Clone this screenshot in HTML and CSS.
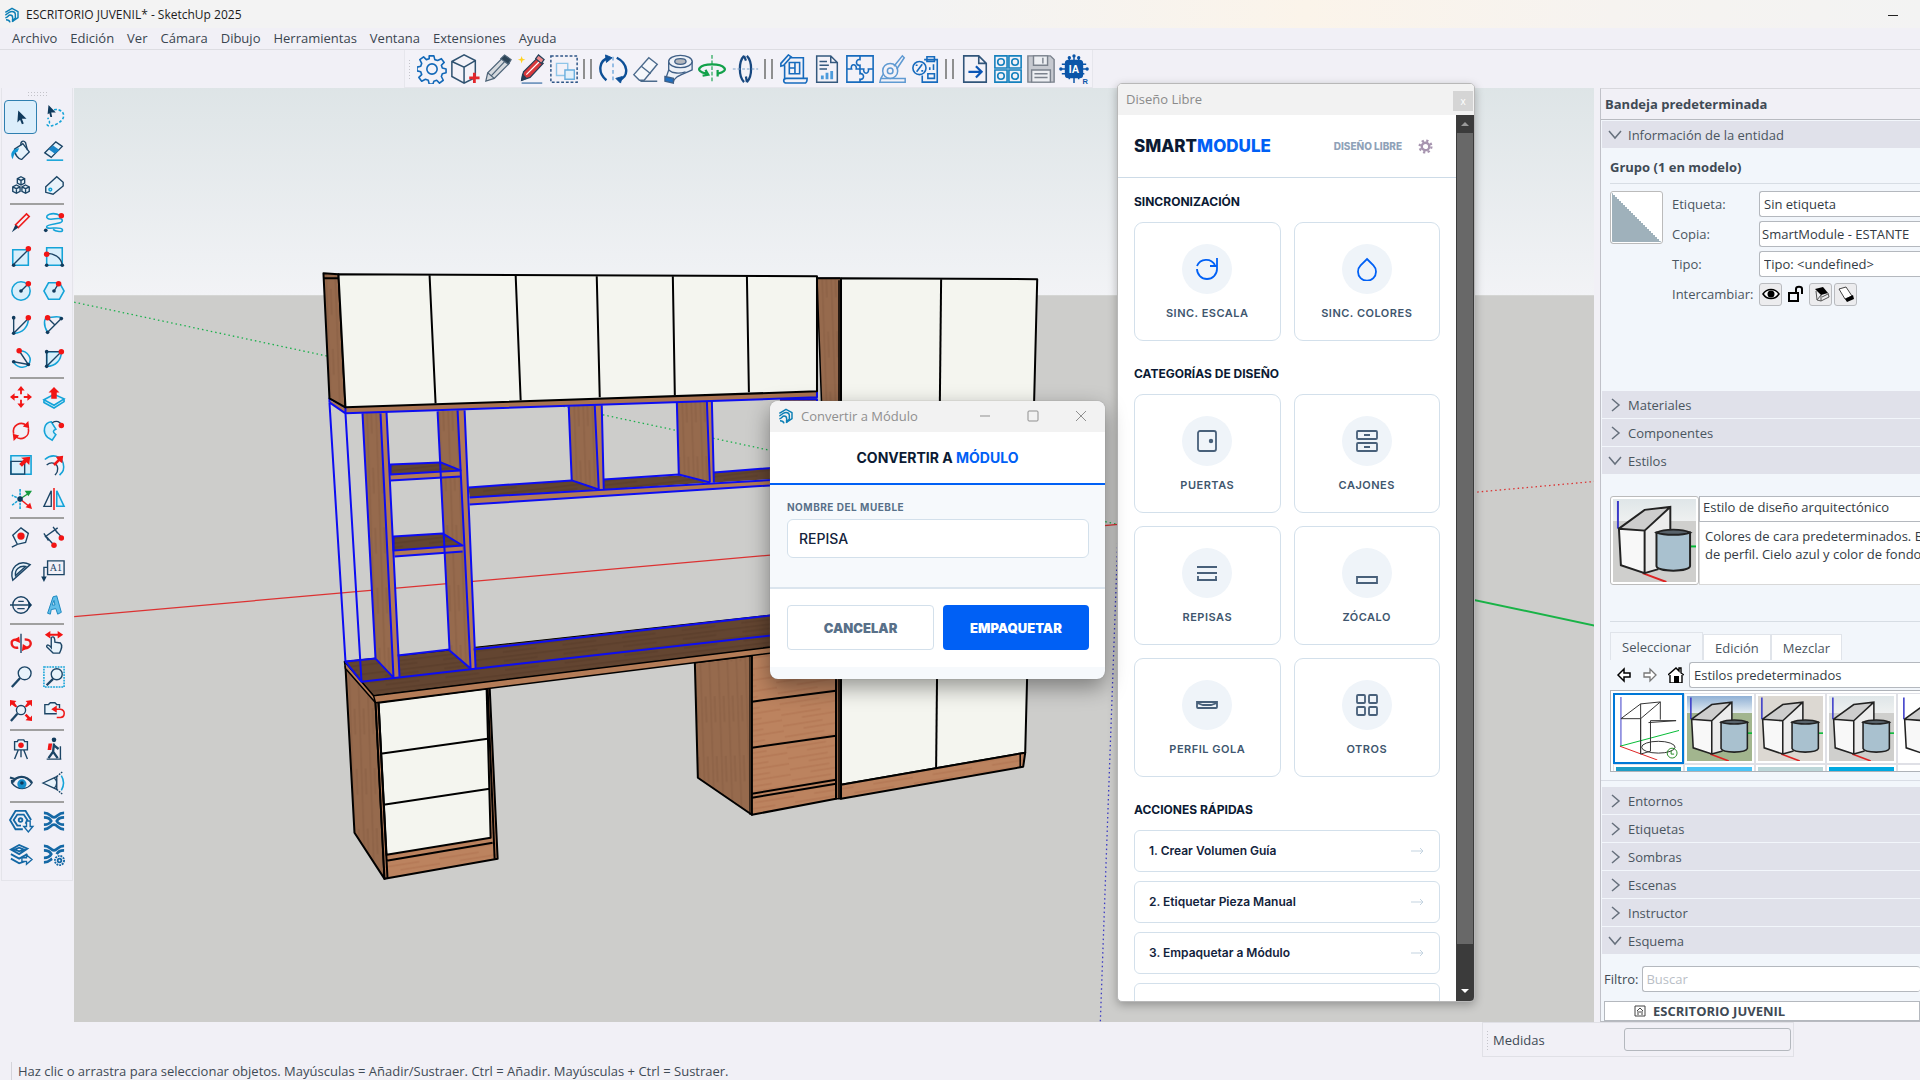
FILE: index.html
```html
<!DOCTYPE html>
<html lang="es">
<head>
<meta charset="utf-8">
<title>ESCRITORIO JUVENIL* - SketchUp 2025</title>
<link rel="stylesheet" href="styles.css">
</head>
<body>
<svg class="defs" aria-hidden="true">
  <defs>
    <linearGradient id="sky" x1="0" y1="0" x2="0" y2="1"><stop offset="0" stop-color="#dde4e6"/><stop offset="1" stop-color="#f2f3f6"/></linearGradient>
    <pattern id="wood" width="60" height="11" patternUnits="userSpaceOnUse" patternTransform="rotate(-9)"><rect width="60" height="11" fill="#bc835f"/><path d="M0 3h40M20 8h40" stroke="#b57a57" stroke-width="2"/></pattern>
    <pattern id="side" width="9" height="60" patternUnits="userSpaceOnUse" patternTransform="rotate(-2)"><rect width="9" height="60" fill="#966a4d"/><path d="M2 0v60M6 0v26" stroke="#8f6448" stroke-width="2"/></pattern>
    <pattern id="dark" width="60" height="9" patternUnits="userSpaceOnUse" patternTransform="rotate(-7)"><rect width="60" height="9" fill="#634531"/><path d="M0 2h60M0 6h34" stroke="#5d402d" stroke-width="2"/></pattern>
  </defs>
  <symbol id="logo" viewBox="0 0 24 24"><g fill="none" stroke="#0b7fb5" stroke-width="2.2" stroke-linejoin="round"><path d="M2 8 12 2l9 5v9l-9 6"/><path d="M2 12c3-1 4-4 8-5s7 1 7 4v6l-5 3"/><path d="M2 16c4 0 4-4 7-4s4 2 4 4v6"/><path d="M3 19c3 0 5 0 6 4"/></g></symbol>
  <symbol id="boxes" viewBox="0 0 84 84"><path d="M5 2v28" stroke="#3a3ac8" stroke-width="2"/><path d="m30 75 24 9" stroke="#d22" stroke-width="2"/><path d="M76 48h8" stroke="#0b3" stroke-width="2"/><path d="M6 30 32 32v43L8 67z" fill="#f8f8f8"/><path d="M6 30 32 11l26-3-26 24z" fill="#cdcdcd"/><path d="M32 32 58 8v52L44 72l-12 3z" fill="#ececec"/><path d="M6 30 32 11l26-3v24M6 30l26 2v43L8 67zM32 32 58 8M32 75l14-4" fill="none" stroke="#222" stroke-width="2"/><path d="M44 34v34c2 6 32 6 34 0V34z" fill="#a9c1cf" stroke="#222" stroke-width="2"/><path d="M44 34c8-4 26-4 34 0-8 3-26 3-34 0z" fill="#59636b" stroke="#222" stroke-width="2"/></symbol>
  <symbol id="chev-d" viewBox="0 0 14 14"><path d="m1 3 6 7 6-7" fill="none" stroke="#66707c" stroke-width="1.5"/></symbol>
  <symbol id="chev-r" viewBox="0 0 14 14"><path d="m4 1 7 6-7 6" fill="none" stroke="#66707c" stroke-width="1.5"/></symbol>
  <symbol id="arrow" viewBox="0 0 14 8"><path d="M0 4h12M9 1l3 3-3 3" fill="none" stroke="#c3d3e0"/></symbol>
</svg>

<header class="titlebar"><svg class="app-logo"><use href="#logo"/></svg><span>ESCRITORIO JUVENIL* - SketchUp 2025</span><button class="win-min" aria-label="Minimizar"></button></header>
<nav class="menubar">
  <a href="#">Archivo</a><a href="#">Edición</a><a href="#">Ver</a><a href="#">Cámara</a><a href="#">Dibujo</a><a href="#">Herramientas</a><a href="#">Ventana</a><a href="#">Extensiones</a><a href="#">Ayuda</a>
</nav>

<div class="toolbar-row"><div class="toolbar" role="toolbar">
  <span class="grip"></span>
  <button aria-label="Configuración"><svg viewBox="0 0 32 32" fill="none" stroke="#1268b8" stroke-width="1.7"><path d="M13 2h5l1 4 3 1 4-2 3 4-3 3 1 3 4 1v4l-4 1-1 3 2 4-4 3-3-3-3 1-1 3h-4l-1-4-3-1-4 2-3-4 3-3-1-3-4-1v-4l4-1 1-3-2-4 4-3 3 3 3-1z" stroke-linejoin="round"/><circle cx="16" cy="16" r="5.5"/></svg></button>
  <button aria-label="Crear volumen"><svg viewBox="0 0 32 32" fill="none" stroke="#2f5270" stroke-width="1.6"><path d="M2 8 15 1l12 6v18l-12 6-13-7zM2 8l13 6 12-7M15 14v17"/><path d="M26 20v11M20.500 25.500h11" stroke="#e3262b" stroke-width="3"/></svg></button>
  <button aria-label="Lápiz"><svg viewBox="0 0 32 32" fill="#d5d9de" stroke="#4e6478" stroke-width="1.3"><path d="m3 29 2-9L21 4l7 6-16 16z"/><path d="m5 20 7 6M9 23 24 7"/><path d="m19 5 4-4 7 5-3 5z" fill="#2c4356"/></svg></button>
  <button aria-label="Editar"><svg viewBox="0 0 32 32" stroke="#243f58" stroke-width="1.3"><path d="m6 28 2-9L22 5l7 5-14 15z" fill="#d8383b"/><path d="m11 22 14-14" stroke="#fff"/><path d="m21 5 3-4 6 5-3 4z" fill="#ef8a8a"/><path d="m6 28 1-6 4 4z" fill="#243f58"/><path d="M6 31h22" stroke="#3a6ea5"/><path d="m6 2 1 3 3 1-3 1-1 3-1-3-3-1 3-1z" fill="#ffd21f" stroke="none"/></svg></button>
  <button aria-label="Seleccionar grupo"><svg viewBox="0 0 32 32" fill="none"><path d="M2 2h28v28H2z" stroke="#2f5687" stroke-width="1.6" stroke-dasharray="3 2"/><path d="M8 10h12v13H8z" stroke="#8fc5e8" stroke-width="1.5"/><path d="M17 17h10v10H17z" fill="#e3f0fa" stroke="#6aaede" stroke-width="1.500"/></svg></button>
  <span class="sep"></span>
  <button aria-label="Rotar"><svg viewBox="0 0 32 32" fill="none" stroke="#0d4f96" stroke-width="2.600"><path d="M9 28C-1 20 1 6 12 4M20 4c12 6 14 20 2 24"/><path d="m8 1 7 3-6 5zM24 31l-5-5 7-2z" fill="#0d4f96" stroke-width="1"/><path d="M16 3v27" stroke="#6fa8dc" stroke-width="1.500" stroke-dasharray="4 3"/></svg></button>
  <button aria-label="Borrador"><svg viewBox="0 0 32 32" fill="#f5f7fb" stroke="#4b6a8c" stroke-width="1.500"><path d="M3 22 19 4l9 7-14 17H9z"/><path d="m11 13 10 8M10 29h18"/></svg></button>
  <button aria-label="Cinta"><svg viewBox="0 0 32 32" fill="#edf1f7" stroke="#3f5f86" stroke-width="1.400"><path d="M5 8v9l-3 9 8 4c2-7 8-7 20-13V8z"/><path d="M5 17c4 4 12 4 18 2"/><ellipse cx="17.500" cy="8" rx="12.500" ry="6.500"/><ellipse cx="17.500" cy="8" rx="6" ry="3" fill="#b5b8bd"/><path d="m1 24 9 2v5l-9-2z" fill="#1f6fc0"/></svg></button>
  <button aria-label="Eje vertical"><svg viewBox="0 0 32 32" fill="none" stroke="#12a14a" stroke-width="2.400"><path d="M10 21c-14-3-7-10 6-10s20 7 6 10M9 17l3 5-6 1"/><path d="M22 17v7" /><path d="M16 1v30" stroke-width="1.200" stroke-dasharray="4 2"/></svg></button>
  <button aria-label="Eje horizontal"><svg viewBox="0 0 32 32" fill="none" stroke="#17477f" stroke-width="2.400"><path d="M15 30C9 24 9 8 15 2M18 2c6 6 6 22 0 28M15 2l2 5M18 30l-1-6"/><path d="M3 16h27" stroke="#7ca1c8" stroke-width="1.300" stroke-dasharray="3 2"/></svg></button>
  <span class="sep"></span>
  <button aria-label="Plano"><svg viewBox="0 0 32 32" fill="none" stroke="#176bbd" stroke-width="1.700"><path d="M11 4h15v22M6 12v15M26 26h4c0 3-1 5-3 5H8c-4 0-4-5 0-5h18M2 10 10 1l3 2-8 9-3 1zM11 9h11v12H11zM11 15h6V9M17 15v6"/></svg></button>
  <button aria-label="Informe"><svg viewBox="0 0 32 32" fill="none" stroke="#35597e" stroke-width="1.600"><path d="M5 2h15l7 7v21H5zM20 2v7h7M8 8h8M8 12h10M8 16h8"/><path d="M11 27v-4M16 27v-7M21 27v-9" stroke="#4c9bdc" stroke-width="3"/></svg></button>
  <button aria-label="Ensamblar"><svg viewBox="0 0 32 32" fill="none" stroke="#176bbd" stroke-width="1.700"><path d="M2 2h28v28H2zM16 2v4c-5-1-5 7 0 6v4M2 16h5c-2-6 6-6 5 0h8c-1 6 6 6 5 0h5M16 16v5c5-1 5 7 0 6v3"/></svg></button>
  <button aria-label="Corte"><svg viewBox="0 0 32 32" fill="none" stroke="#5f9ad2" stroke-width="1.600"><circle cx="13" cy="18" r="8"/><circle cx="13" cy="18" r="3"/><path d="M17 13 26 2l2 2-8 12M3 26h26v4H2zM3 26l3-5"/></svg></button>
  <button aria-label="Presupuesto"><svg viewBox="0 0 32 32" fill="none" stroke="#176bbd" stroke-width="1.700"><path d="M14 6h14v24H12v-7M17 3h8v5h-8z"/><circle cx="9" cy="15" r="7"/><path d="M6 19 12 11M5 12h2M11 18h2M20 17v-3M24 17v-6M18 21h7v5h-7z"/></svg></button>
  <span class="sep"></span>
  <button aria-label="Exportar"><svg viewBox="0 0 32 32" fill="none" stroke="#31557a" stroke-width="1.700"><path d="M4 2h16l8 8v20H4zM20 2v8h8"/><path d="M9 19h14M17 13l6 6-6 6" stroke="#0a55b5" stroke-width="2.400"/></svg></button>
  <button aria-label="Catálogo"><svg viewBox="0 0 32 32" fill="none" stroke="#1580bd" stroke-width="1.700"><path d="M2 2h13v13H2zM17 2h13v13H17zM2 17h13v13H2zM17 17h13v13H17z"/><circle cx="8.500" cy="8.500" r="3.500"/><circle cx="23.500" cy="8.500" r="3.500"/><circle cx="8.500" cy="23.500" r="3.500"/><circle cx="23.500" cy="23.500" r="3.500"/></svg></button>
  <button aria-label="Guardar"><svg viewBox="0 0 32 32" fill="#c6c9d0" stroke="#7b828d" stroke-width="1.500"><path d="M2 2h24l4 4v24H2z"/><path d="M8 2h15v10H8zM6 17h20v13H6z" fill="#eceef2"/><path d="M18 4v6M9 21h14M9 25h14"/></svg></button>
  <button aria-label="IA"><svg viewBox="0 0 32 32" fill="#0b55a8" stroke="#0b55a8" stroke-width="1.600"><path d="M11 3v24M16 1v30M21 3v24M3 11h26M1 16h30M3 21h24"/><rect x="7" y="7" width="18" height="18" rx="3"/><circle cx="16" cy="2" r="1"/><circle cx="2" cy="16" r="1"/><circle cx="30" cy="16" r="1"/><circle cx="11" cy="4" r="1"/><circle cx="21" cy="4" r="1"/><text x="16" y="20" class="ia">IA</text><text x="28" y="32" class="ia-r">R</text></svg></button>
</div></div>

<main class="workspace">
<aside class="tools">
  <span class="grip-h"></span>
  <div class="tool-grid">
    <button class="on" aria-label="Seleccionar"><svg viewBox="0 0 24 24"><path d="m9 5 9 9h-5l2 5-2 1-2-5-3 3z" fill="#103a5c"/></svg></button>
    <button aria-label="Lazo"><svg viewBox="0 0 24 24"><path d="M12 4c8-1 12 4 10 9s-9 8-14 9c-4 0-4-3-2-3s1-4-1-6" class="c" stroke-dasharray="3 2"/><path d="m6-1 8 8H9l1 5H8L7 8 5 9z" fill="#103a5c"/></svg></button>
    <button aria-label="Pintar"><svg viewBox="0 0 24 24"><path d="m5 10 9-6 7 9-8 8c-3 1-9-6-8-11z" class="nf"/><path d="M3 21c-4-6 0-12 7-12l-2 4c-3 0-4 4-5 8z" fill="#1197d5"/><path d="M12 6c-1-5 3-6 5-3l2 8" class="n"/></svg></button>
    <button aria-label="Borrar"><svg viewBox="0 0 24 24"><path d="m2 14 12-12 7 5-12 12z" class="nf"/><path d="m6 10 5-4 7 5-5 4z" fill="#1b86c9"/><path d="M4 22h18" class="c"/></svg></button>
    <button aria-label="Componentes"><svg viewBox="0 0 24 24"><path d="m12 3 4 2v5l-4 2-4-2V5zM8 5l4 2 4-2M12 7v5M7 12l4 2v5l-4 2-4-2v-5zM3 14l4 2 4-2M7 16v5M17 12l4 2v5l-4 2-4-2v-5zM13 14l4 2 4-2M17 16v5" class="nf"/></svg></button>
    <button aria-label="Etiqueta"><svg viewBox="0 0 24 24"><path d="M3 14 15 3l7 6v4L11 22l-8-2z" class="nf"/><circle cx="8" cy="17" r="1.500" class="c"/></svg></button>
  </div><hr>
  <div class="tool-grid">
    <button aria-label="Línea"><svg viewBox="0 0 24 24"><path d="m6 14 12-12 3 3L9 17z" class="r"/><path d="m2 22 4-8 3 3z" fill="#103a5c"/></svg></button>
    <button aria-label="Mano alzada"><svg viewBox="0 0 24 24"><path d="M19 4C10-1 1 4 5 7s15-3 16 2-16 3-17 7 15-1 17 3-8 2-10 0" class="c"/><circle cx="20" cy="4" r="3" class="rd"/><circle cx="3" cy="20" r="2" class="nd"/></svg></button>
    <button aria-label="Rectángulo"><svg viewBox="0 0 24 24"><path d="M3 4h17v17H3z" class="cf"/><path d="M3 21 20 4" class="n"/><circle cx="20" cy="3" r="3" class="rd"/><circle cx="4" cy="21" r="2" class="nd"/></svg></button>
    <button aria-label="Rectángulo girado"><svg viewBox="0 0 24 24"><path d="M4 2h17v19H4z" class="cf"/><path d="M4 8c8 0 16 4 17 13" class="n"/><circle cx="4" cy="9" r="3" class="rd"/><circle cx="4" cy="21" r="2" class="nd"/><circle cx="21" cy="21" r="2" class="nd"/></svg></button>
    <button aria-label="Círculo"><svg viewBox="0 0 24 24"><circle cx="12" cy="12" r="10" class="cf"/><path d="m12 12 8-8" class="n"/><circle cx="12" cy="12" r="2" class="nd"/><circle cx="20" cy="4" r="3" class="rd"/></svg></button>
    <button aria-label="Polígono"><svg viewBox="0 0 24 24"><path d="M6 3h12l5 9-5 9H6l-5-9z" class="cf"/><path d="m12 12 5-8" class="n"/><circle cx="12" cy="12" r="2" class="nd"/><circle cx="17" cy="4" r="3" class="rd"/></svg></button>
    <button aria-label="Arco"><svg viewBox="0 0 24 24"><path d="M4 4v17L20 5" class="n"/><path d="M20 5c0 9-6 16-16 16" class="c"/><circle cx="20" cy="4" r="3" class="rd"/><circle cx="4" cy="4" r="2" class="nd"/><circle cx="4" cy="21" r="2" class="nd"/></svg></button>
    <button aria-label="Arco de 2 puntos"><svg viewBox="0 0 24 24"><path d="M5 20C0 12 1 4 5 4s14-3 15 1" class="c"/><path d="M5 20 20 5M5 4l8 8" class="n"/><circle cx="5" cy="4" r="3" class="rd"/><circle cx="20" cy="5" r="2" class="nd"/><circle cx="5" cy="20" r="2" class="nd"/></svg></button>
    <button aria-label="Arco de 3 puntos"><svg viewBox="0 0 24 24"><path d="M10 3c10 0 15 9 10 15s-14 2-16-3" class="c"/><path d="m10 3 10 15L4 15" class="n"/><circle cx="10" cy="3" r="3" class="rd"/><circle cx="4" cy="15" r="2" class="nd"/><circle cx="20" cy="18" r="2" class="nd"/></svg></button>
    <button aria-label="Sector"><svg viewBox="0 0 24 24"><path d="M4 4h16c0 9-6 16-16 16z" class="cf"/><path d="M4 4v16L20 4z" class="n"/><circle cx="20" cy="4" r="3" class="rd"/><circle cx="4" cy="4" r="2" class="nd"/><circle cx="4" cy="20" r="2" class="nd"/></svg></button>
  </div><hr>
  <div class="tool-grid">
    <button aria-label="Mover"><svg viewBox="0 0 24 24"><path d="m12 0 4 5h-3v4h-2V5H8zM12 24l-4-5h3v-4h2v4h3zM0 12l5-4v3h4v2H5v3zM24 12l-5 4v-3h-4v-2h4V8z" class="rd"/></svg></button>
    <button aria-label="Empujar"><svg viewBox="0 0 24 24"><path d="m1 15 11-6 11 5-11 7zM1 15v3l11 6 11-7v-3" class="cf"/><path d="m12 1 6 6h-3v7H9V7H6z" class="rd"/></svg></button>
    <button aria-label="Girar"><svg viewBox="0 0 24 24"><path d="M4 15C2 5 12 1 18 6M20 9c2 10-8 14-14 9" class="r"/><path d="m20 1 1 8-7-2zM4 23l-1-8 7 2z" class="rd"/></svg></button>
    <button aria-label="Sígueme"><svg viewBox="0 0 24 24"><path d="M9 2c-8 1-10 11-4 17l5 3 4-6c-4-3-3-5 0-6z" class="cf"/><path d="M10 3c5-3 9-1 10 3" class="n"/><circle cx="20" cy="6" r="3" class="rd"/></svg></button>
    <button aria-label="Escala"><svg viewBox="0 0 24 24"><path d="M1 2h22v20H1z" class="cf"/><path d="M1 8h15v14H1z" class="n"/><path d="m22 3-1 9-3-3-5 5-3-3 5-5-3-2z" class="rd"/></svg></button>
    <button aria-label="Desfase"><svg viewBox="0 0 24 24"><path d="M2 6c8-7 18-4 20 4s-1 10-4 13" class="c"/><path d="M4 12c6-5 12-1 12 4s-1 5-3 7" class="n"/><path d="m22 2-1 8-3-2-5 5-2-2 5-5-2-3z" class="rd"/></svg></button>
    <button aria-label="Ejes"><svg viewBox="0 0 24 24"><path d="M11 12V0M11 12 2 8M11 12v12M11 12l-9 7" class="c" stroke-dasharray="3 1"/><path d="m11 12 11 9" class="r"/><path d="m17 21 7 2-2-7z" class="rd"/><path d="m11 12 9-6" stroke="#159a3e" stroke-width="1.500"/><path d="m16 3 8 0-4 6z" fill="#159a3e"/><circle cx="11" cy="12" r="3" class="nd"/></svg></button>
    <button aria-label="Simetría"><svg viewBox="0 0 24 24"><path d="M9 3v17H1z" class="n"/><path d="M15 3v17h8z" class="cf"/><path d="M12 0v24" class="r"/></svg></button>
  </div><hr>
  <div class="tool-grid">
    <button aria-label="Medir"><svg viewBox="0 0 24 24"><path d="M3 10 12 2l8 6-3 10-9 2zM8 20l-6 3" class="nf"/><circle cx="12" cy="11" r="4" class="rd"/></svg></button>
    <button aria-label="Acotación"><svg viewBox="0 0 24 24"><path d="m2 12 14-10M1 8l5 8M11 1l5 7M4 12l8 9M14 5l7 8" class="n"/><circle cx="12" cy="21" r="3" class="rd"/><circle cx="20" cy="13" r="3" class="rd"/></svg></button>
    <button aria-label="Transportador"><svg viewBox="0 0 24 24"><path d="M3 22C-1 9 9-1 22 5zM6 17c-1-6 4-11 11-10z" class="nf"/></svg></button>
    <button aria-label="Texto"><svg viewBox="0 0 24 24"><path d="M5 1h18v15H5zM5 8H1v11" class="n"/><path d="m1 24-3-6h6z" fill="#103a5c"/><text x="14" y="12" class="a1">A1</text></svg></button>
    <button aria-label="Sección"><svg viewBox="0 0 24 24"><circle cx="12" cy="12" r="9" class="n"/><path d="M0 12h23M9 8h6M8 16h8" class="n"/><path d="m18 5 6 7-6 7 3-7z" class="nd"/></svg></button>
    <button aria-label="Texto 3D"><svg viewBox="0 0 24 24"><path d="m5 21 6-18 4-1 5 18-4 2-2-6-5 1-1 5zM10 12h3l-1-5z" fill="#62bee9" stroke="#1583bd"/></svg></button>
  </div><hr>
  <div class="tool-grid">
    <button aria-label="Orbitar"><svg viewBox="0 0 24 24"><path d="M8 8C2 8 1 11 2 14M16 8c7 0 8 5 5 8-2 2-5 2-7 2M2 10c-1 5 2 8 7 7" class="r big"/><path d="m14 13-1 8 7-4zM10 5l1 7-7-3z" class="rd"/><path d="M12 2v21" class="n"/></svg></button>
    <button aria-label="Desplazar"><svg viewBox="0 0 24 24"><path d="m2 3 6-4v3h8v-3l6 4-6 4V4H8v3z" class="rd"/><path d="M9 17V6c3-2 4 1 4 5l6 1c3 3 1 7-1 11h-7l-7-7c0-3 3-2 5 1z" class="nf"/></svg></button>
    <button aria-label="Zoom"><svg viewBox="0 0 24 24"><circle cx="16" cy="8" r="7" class="nf"/><path d="M11 13 2 23" class="n big"/></svg></button>
    <button aria-label="Ventana de zoom"><svg viewBox="0 0 24 24"><path d="M1 1h22v22H1z" class="c" stroke-dasharray="2 1"/><circle cx="15" cy="9" r="6" class="nf"/><path d="m11 14-7 7" class="n big"/></svg></button>
    <button aria-label="Ver todo"><svg viewBox="0 0 24 24"><circle cx="12" cy="11" r="5" class="nf"/><path d="m8 15-7 8" class="n big"/><path d="m0 0 7 1-2 2 3 4-2 1-4-3-2 2zM24 0l-7 1 2 2-3 4 2 1 4-3 2 2zM24 23l-7-1 2-2-3-3 2-2 4 4 2-2z" class="rd"/></svg></button>
    <button aria-label="Anterior"><svg viewBox="0 0 24 24"><path d="M15 15H2V5h4l2-2h5l2 2h3v4" class="nf"/><path d="M12 10h7c6 1 5 9 0 9h-4" class="r"/><path d="m9 10 6-4v8z" class="rd"/></svg></button>
  </div><hr>
  <div class="tool-grid">
    <button aria-label="Situar cámara"><svg viewBox="0 0 24 24"><path d="M5 4h3l1-2h6l1 2h3v9H5zM9 13 5 23M15 13l4 10M12 13v8" class="nf"/><circle cx="12" cy="8" r="3" class="rd"/></svg></button>
    <button aria-label="Caminar"><svg viewBox="0 0 24 24"><circle cx="12" cy="2" r="2.500" class="nd"/><path d="m12 6-1 9 5 7M11 15l-5 7M12 8l5 4" class="n big"/><path d="M19 9v14M4 23h16" class="n"/><path d="M6 6h4l-1 7H5z" class="rd"/></svg></button>
    <button aria-label="Mirar"><svg viewBox="0 0 24 24"><path d="M2 12c5-8 16-9 22 0-5 8-16 8-22 0z" class="n"/><path d="M2 12C7 3 18 3 24 12M0 6l6 2M1 10l4 0" class="n big"/><circle cx="13" cy="13" r="5" fill="#168dca"/><circle cx="13" cy="12" r="2" class="nd"/></svg></button>
    <button aria-label="Campo visual"><svg viewBox="0 0 24 24"><path d="M0 12 15 5v14zM12 6c4 4 4 8 0 12" class="nf"/><path d="m15 5 6-5M15 19l6 5" class="n" stroke-dasharray="2 1"/><path d="M20 4c3 5 3 11 0 16" class="c"/></svg></button>
  </div><hr>
  <div class="tool-grid">
    <button aria-label="Almacén 3D"><svg viewBox="0 0 24 24"><path d="M14 21H6L0 11 6 1h11l6 10" class="b"/><path d="M12 17H8l-4-6 4-6h7l4 6-2 4" class="b"/><circle cx="11.500" cy="11" r="2" class="b"/><path d="M18 12h4v6h3l-5 6-5-6h3z" fill="#f1f0f7" stroke="#1468a5" stroke-width="1.500"/></svg></button>
    <button aria-label="Extensiones"><svg viewBox="0 0 24 24"><path d="M1 3c7 0 7 5 11 5s4-5 11-5M1 8c6 0 8 4 8 4s-2 4-8 4M23 8c-6 0-8 4-8 4s2 4 8 4M1 21c7 0 7-5 11-5s4 5 11 5" class="b wide"/></svg></button>
    <button aria-label="LayOut"><svg viewBox="0 0 24 24"><path d="m1 6 9-5 9 4-9 6zM1 11l9 5 9-5M1 16l9 5 6-2M5 6l5-2 5 2-5 2z" class="b"/><path d="M13 15h5v-3l6 5-6 5v-3h-5z" fill="#f1f0f7" stroke="#1468a5" stroke-width="1.500"/></svg></button>
    <button aria-label="Gestor de extensiones"><svg viewBox="0 0 24 24"><path d="M1 2c7 0 7 5 11 5s4-5 11-5M1 7c6 0 8 4 8 4s-2 4-8 4M23 7c-6 0-8 4-8 4M1 20c6 0 7-3 9-4" class="b wide"/><circle cx="18" cy="18" r="5" class="b" stroke-dasharray="2 1"/><circle cx="18" cy="18" r="2" class="b"/></svg></button>
  </div>
</aside>

<section class="viewport">
  <svg class="model" viewBox="74 88 1520 933" preserveAspectRatio="xMidYMin slice" role="img" aria-label="Modelo del escritorio">
    <rect x="0" y="80" width="1700" height="216" fill="url(#sky)"/><rect x="0" y="295" width="1700" height="800" fill="#cdcdcb"/>
    <g fill="none" stroke-width="1.300">
      <path d="M75 302 1118 524" stroke="#1bb04c" stroke-dasharray="1.500 3"/><path d="M75 616 1118 524" stroke="#dc3232"/>
      <path d="M1118 400v124" stroke="#2a2ad0"/><path d="m1118 524-18 498" stroke="#3a3ac4" stroke-dasharray="1.500 3"/>
      <path d="m1118 524 476-43" stroke="#dc3232" stroke-dasharray="1.500 3"/><path d="m1118 524 476 101" stroke="#19b347" stroke-width="2"/>
    </g>
    <g stroke-linejoin="round">
      <!-- tall cabinet -->
      <path d="M817 278h24v520h-5z" fill="url(#side)" stroke="#000" stroke-width="1.500"/>
      <path d="m841 278 196 1-12 473-184 32z" fill="#f4f5ef" stroke="#000" stroke-width="2"/><path d="m941 279-5 488" stroke="#000" stroke-width="2"/>
      <path d="m841 784 184-32-2 14-182 32z" fill="url(#wood)" stroke="#000" stroke-width="2"/><path d="M1020 753v14M839 280v518M836 678v120" stroke="#000" stroke-width="1.500"/>
      <!-- right drawers -->
      <path d="m695 662 57-7v159l-54-37z" fill="url(#side)" stroke="#000" stroke-width="2"/>
      <path d="m752 640 84-10v168l-84 16z" fill="url(#wood)" stroke="#000" stroke-width="2"/>
      <path d="m752 701 84-11M752 747l84-12M752 793l84-14M752 797l84-14" stroke="#000" stroke-width="2"/><path d="M750 656v158" stroke="#000"/>
      <!-- left drawers -->
      <path d="m346 666 30 35 9 177-30-46z" fill="url(#side)" stroke="#000" stroke-width="2"/>
      <path d="m376 701 114-15 8 172-113 20z" fill="url(#wood)" stroke="#000" stroke-width="2"/>
      <path d="m379 702 108-14 4 149-104 17z" fill="#f4f5ef" stroke="#000" stroke-width="2"/>
      <path d="m381 753 107-15M384 804l106-16M387 860l106-18M379 702l9 176M488 688l7 170" stroke="#000" stroke-width="2" fill="none"/>
      <!-- desk top -->
      <path d="m345 661 495-54v32l-466 56z" fill="url(#dark)" stroke="#000"/>
      <path d="m374 695 466-57v6L376 702zM345 661l29 34 2 7-30-34z" fill="#b47c57" stroke="#000" stroke-width="1.500"/>
      <!-- vertical panels -->
      <path d="m363 413 18-1 13 265-18-19z" fill="url(#side)"/><path d="m381 413 6-1 13 264-6 1z" fill="#b27a56"/>
      <path d="m438 411 20-1 13 258-21-18z" fill="url(#side)"/><path d="m458 410 7-1 11 259h-6z" fill="#b27a56"/>
      <path d="m569 406 26-1 4 84-27-9z" fill="url(#side)"/><path d="m595 405 7-1 2 84-5 1z" fill="#b27a56"/>
      <path d="m677 402 30-1 3 81-31-7z" fill="url(#side)"/><path d="m707 401 5-1 2 82h-4z" fill="#b27a56"/>
      <path d="M780 398h37v90h-37z" fill="url(#side)"/>
      <!-- shelves -->
      <path d="m391 464 50-2 20 8-70 4zM394 536l49-3 20 12-69 5zM469 487l103-7 27 9-129 8zM604 479l75-4 31 7-106 7zM714 472l103-8v12l-103 6z" fill="url(#dark)"/>
      <path d="m391 474 70-4v6l-70 4zM394 550l69-5v6l-68 5zM470 497l347-20v5l-347 22z" fill="#b27a56"/>
      <path d="m330 400 16 7 471-16v6l-471 16-16-11z" fill="#a97351"/>
      <g fill="none" stroke="#0d0df2" stroke-width="2">
        <path d="m346 413 471-16v-6M330 402l16 259M346 413l16 268M346 407v6M330 402v-4l16 9M330 402l16 11"/>
        <path d="m363 413 13 245 18 19-13-264M387 412l13 264M438 411l12 239 21 18-13-258M465 410l11 258"/>
        <path d="m391 464 50-2 20 8-70 4zM391 480l70-4M394 536l49-3 20 12-69 5zM395 556l68-5"/>
        <path d="m469 487 103-7 27 9M604 479l75-5 31 8M714 472l103-8M470 497l347-20M470 504l347-22"/>
        <path d="m569 406 3 74M595 405l4 84M602 405l2 84M677 402l2 73M707 401l3 81M712 401l2 81M780 399h37v60"/>
        <path d="m346 661 30-3M398 655l52-6M474 649l366-42M346 661l16 20 478-54"/>
      </g>
      <!-- upper cabinet -->
      <path d="m324 273 15 1 7 133-16-9z" fill="url(#side)" stroke="#000" stroke-width="2"/>
      <path d="m339 274 478 2v115l-471 16z" fill="#f4f5ef" stroke="#000" stroke-width="2"/>
      <path d="m430 275 6 128M516 275l5 125M597 276l3 121M673 276l2 119M747 276l2 116M324 278h15M817 278h23" fill="none" stroke="#000" stroke-width="2"/>
    </g>
  </svg>

  <section class="panel">
    <div class="panel-title"><span>Diseño Libre</span><button aria-label="Cerrar panel">x</button></div>
    <div class="panel-main">
      <div class="panel-body">
        <div class="brand"><h1>SMART<b>MODULE</b></h1><span>DISEÑO LIBRE</span><button aria-label="Ajustes"><svg viewBox="0 0 16 16" fill="none" stroke="#a795b0"><circle cx="8" cy="8" r="4" stroke-width="2.500"/><circle cx="8" cy="8" r="6.300" stroke-width="2.400" stroke-dasharray="2.400 2.550"/></svg></button></div>
        <div class="panel-content">
          <h2>SINCRONIZACIÓN</h2>
          <div class="cards">
            <button class="blue"><i><svg viewBox="0 0 24 24"><path d="M2 9a10 10 0 0 1 18-1M22 1v8h-7M2 12a10 10 0 0 0 20 0V9"/></svg></i>SINC. ESCALA</button>
            <button class="blue"><i><svg viewBox="0 0 24 24"><path d="m12 2 6.400 6.400a9 9 0 1 1-12.800 0z"/></svg></i>SINC. COLORES</button>
          </div>
          <h2>CATEGORÍAS DE DISEÑO</h2>
          <div class="cards">
            <button><i><svg viewBox="0 0 24 24"><rect x="3" y="2" width="18" height="20" rx="2"/><circle cx="16" cy="12" r="1.300" fill="#48607a"/></svg></i>PUERTAS</button>
            <button><i><svg viewBox="0 0 24 24"><rect x="2" y="2" width="20" height="8" rx="1"/><rect x="2" y="14" width="20" height="8" rx="1"/><path d="M9 6h6M9 18h6"/></svg></i>CAJONES</button>
            <button><i><svg viewBox="0 0 24 24"><path d="M2 6h20M2 12h20M2 19h20M3 15v5M21 15v5"/></svg></i>REPISAS</button>
            <button><i><svg viewBox="0 0 24 24"><path d="M2 16h20v6H2z"/></svg></i>ZÓCALO</button>
            <button><i><svg viewBox="0 0 24 24"><path d="M2 9h20v5a1 1 0 0 1-1 1H3a1 1 0 0 1-1-1zM2 10l6 2h8l6-2"/></svg></i>PERFIL GOLA</button>
            <button><i><svg viewBox="0 0 24 24"><rect x="2" y="2" width="8" height="8" rx="1"/><rect x="14" y="2" width="8" height="8" rx="1"/><rect x="2" y="14" width="8" height="8" rx="1"/><rect x="14" y="14" width="8" height="8" rx="1"/></svg></i>OTROS</button>
          </div>
          <h2>ACCIONES RÁPIDAS</h2>
          <div class="actions">
            <button>1. Crear Volumen Guía<svg><use href="#arrow"/></svg></button>
            <button>2. Etiquetar Pieza Manual<svg><use href="#arrow"/></svg></button>
            <button>3. Empaquetar a Módulo<svg><use href="#arrow"/></svg></button>
            <button aria-label="Acción 4"></button>
          </div>
        </div>
      </div>
      <div class="scroll"><span class="up"></span><span class="thumb"></span><span class="down"></span></div>
    </div>
  </section>

  <section class="dialog">
    <div class="dialog-title"><svg><use href="#logo"/></svg><span>Convertir a Módulo</span><button aria-label="Minimizar"><svg viewBox="0 0 12 12"><path d="M1 6h10"/></svg></button><button aria-label="Maximizar"><svg viewBox="0 0 12 12"><rect x="1" y="1" width="10" height="10" rx="1"/></svg></button><button aria-label="Cerrar"><svg viewBox="0 0 12 12"><path d="m1 1 10 10M11 1 1 11"/></svg></button></div>
    <h2>CONVERTIR A <b>MÓDULO</b></h2>
    <div class="dialog-body"><label for="nombre">NOMBRE DEL MUEBLE</label><input id="nombre" value="REPISA"></div>
    <div class="dialog-foot"><button>CANCELAR</button><button class="primary">EMPAQUETAR</button></div>
  </section>
</section>

<aside class="tray">
  <h2>Bandeja predeterminada</h2>
  <button class="acc"><svg><use href="#chev-d"/></svg>Información de la entidad</button>
  <div class="entity">
    <h3>Grupo (1 en modelo)</h3>
    <div class="entity-row">
      <span class="swatch"></span>
      <div class="fields">
        <label for="etq">Etiqueta:</label><select id="etq"><option>Sin etiqueta</option></select>
        <label for="cop">Copia:</label><input id="cop" value="SmartModule - ESTANTE">
        <label for="tip">Tipo:</label><select id="tip"><option>Tipo: &lt;undefined&gt;</option></select>
        <span>Intercambiar:</span>
        <div class="toggles">
          <button aria-label="Visible"><svg viewBox="0 0 18 18"><path d="M1 9c4-6 12-6 16 0-4 6-12 6-16 0z" fill="#fff" stroke="#000" stroke-width="1.500"/><circle cx="9" cy="9" r="3.500"/></svg></button>
          <button class="flat" aria-label="Bloquear"><svg viewBox="0 0 18 18" fill="none" stroke="#000" stroke-width="2"><path d="M2 8h9v8H2zM9 8V4c0-3 6-3 6 0v5"/></svg></button>
          <button aria-label="Recibir sombras"><svg viewBox="0 0 18 18"><path d="m3 4 8-2 5 6-7 2z"/><path d="m4 6 1 9 4 1 8-4-1-4M5 15l4-5v6M10 12l6-3" fill="none" stroke="#555"/></svg></button>
          <button aria-label="Arrojar sombras"><svg viewBox="0 0 18 18"><path d="m2 4 7-2 6 9-7 3z" fill="#fff" stroke="#444"/><path d="m8 14 8-4 1 4-7 3z"/></svg></button>
        </div>
      </div>
    </div>
  </div>
  <button class="acc"><svg><use href="#chev-r"/></svg>Materiales</button>
  <button class="acc"><svg><use href="#chev-r"/></svg>Componentes</button>
  <button class="acc"><svg><use href="#chev-d"/></svg>Estilos</button>
  <div class="styles">
    <div class="style-head">
      <div class="thumb-big"><svg><use href="#boxes"/></svg></div>
      <div class="style-text"><input aria-label="Nombre del estilo" value="Estilo de diseño arquitectónico"><p>Colores de cara predeterminados. Bordes<br>de perfil. Cielo azul y color de fondo gris.</p></div>
    </div>
    <div class="tabs"><button class="on">Seleccionar</button><button>Edición</button><button>Mezclar</button></div>
    <div class="style-nav">
      <button aria-label="Atrás"><svg viewBox="0 0 16 16"><path d="m2 8 6-6v4h6v4H8v4z" fill="#fff" stroke="#000" stroke-width="1.500"/></svg></button>
      <button aria-label="Adelante"><svg viewBox="0 0 16 16"><path d="m14 8-6-6v4H2v4h6v4z" fill="#fff" stroke="#777" stroke-width="1.300"/></svg></button>
      <button aria-label="Inicio"><svg viewBox="0 0 16 16"><path d="m0 8 8-7 3 3V1h2v5l3 2M2 8v8h12V8" fill="#fff" stroke="#000" stroke-width="1.400"/><path d="M6 9h5v7H6z"/></svg></button>
      <select aria-label="Colección"><option>Estilos predeterminados</option></select>
    </div>
    <div class="thumbs">
      <span class="cell sel"><svg viewBox="0 0 64 64" fill="none" stroke="#333"><path d="M4 0v50" stroke="#3a3ac8"/><path d="m3 50 60-16" stroke="#0b3"/><path d="m3 50 38 14" stroke="#d22"/><path d="M4 22 24 7l20-2v18M4 22h20v36l10-3M24 22 44 5M24 7v50M34 55V24h26l-28 2"/><ellipse cx="42" cy="51" rx="17" ry="6"/><circle cx="56" cy="57" r="5" stroke="#2a8c2a"/><path d="M55 54v4h3" stroke="#2a8c2a"/></svg></span>
      <span class="cell land"><svg><use href="#boxes"/></svg></span>
      <span class="cell sand"><svg><use href="#boxes"/></svg></span>
      <span class="cell gray"><svg><use href="#boxes"/></svg></span>
      <span class="cell"><svg><use href="#boxes"/></svg></span>
      <span class="cell s1"></span><span class="cell s2"></span><span class="cell s3"></span><span class="cell s4"></span><span class="cell"></span>
    </div>
  </div>
  <button class="acc"><svg><use href="#chev-r"/></svg>Entornos</button>
  <button class="acc"><svg><use href="#chev-r"/></svg>Etiquetas</button>
  <button class="acc"><svg><use href="#chev-r"/></svg>Sombras</button>
  <button class="acc"><svg><use href="#chev-r"/></svg>Escenas</button>
  <button class="acc"><svg><use href="#chev-r"/></svg>Instructor</button>
  <button class="acc"><svg><use href="#chev-d"/></svg>Esquema</button>
  <div class="outline"><div class="filter"><label for="flt">Filtro:</label><input id="flt" placeholder="Buscar"></div>
    <div class="tree"><svg viewBox="0 0 12 12" fill="none" stroke="#444"><path d="M1 1h10v10H1zM3 6l3-3 3 3M4 6v4M8 6v4M6 6v2"/></svg>ESCRITORIO JUVENIL</div></div>
</aside>
</main>

<footer class="footer">
  <div class="measure"><span class="grip"></span><label for="med">Medidas</label><input id="med"></div>
  <p>Haz clic o arrastra para seleccionar objetos. Mayúsculas = Añadir/Sustraer. Ctrl = Añadir. Mayúsculas + Ctrl = Sustraer.</p>
</footer>
</body>
</html>
```
FILE: styles.css
```css
* { box-sizing: border-box; }
body { margin: 0; min-height: 100vh; display: flex; flex-direction: column; overflow: hidden; background: #f1f0f6; color: #3f4a55; font: 13px/18px "Open Sans", "Noto Sans", sans-serif; }
button { padding: 0; border: 0; background: none; color: inherit; font: inherit; }
input, select { min-width: 0; border: 1px solid #b4b8be; border-radius: 3px; background: #fff; color: #333b44; font: inherit; appearance: none; }
h1, h2, h3, p { margin: 0; }
svg { display: block; }
.defs { position: absolute; width: 0; height: 0; }

.titlebar { display: flex; align-items: center; gap: 6px; height: 28px; padding: 2px 22px 0 4px; background: linear-gradient(90deg, #f3f3f3 48%, #fbf4ea 68%, #f6f3f0 84%, #f3f3f3); color: #1b1b1b; font-size: 12px; }
.app-logo { width: 16px; height: 16px; }
.win-min { width: 10px; height: 1px; margin-left: auto; background: #222; }
.menubar { display: flex; gap: 13px; height: 22px; padding: 1px 12px; border-bottom: 1px solid #dddde2; font-size: 13px; }
.menubar a { color: #3a4550; text-decoration: none; }

.toolbar-row { height: 38px; padding-left: 404px; }
.toolbar { display: inline-flex; align-items: center; height: 38px; padding: 1px 2px 0 0; border: 1px solid #e6e6ec; border-top: 0; background: #f3f2f8; }
.toolbar button { display: grid; place-items: center; width: 33px; height: 34px; }
.toolbar button svg { width: 30px; height: 30px; }
.grip { width: 10px; height: 20px; padding: 0 3px; background: radial-gradient(circle, #c4c4ca 1px, transparent 1px) 0 0 / 3px 3px content-box; }
.sep { width: 16px; height: 20px; border: solid transparent; border-width: 0 4px 0 3px; background: linear-gradient(90deg, #8f8f8f 2px, transparent 2px 7px, #8f8f8f 7px) padding-box; }
.ia, .ia-r { fill: #fff; stroke: none; font: 700 11px "Liberation Sans", sans-serif; text-anchor: middle; }
.ia-r { fill: #0b55a8; font-size: 8px; }

.workspace { flex: 1; display: flex; min-height: 0; }
.tools { flex: none; width: 72px; margin: 0 1px; border: 1px solid #e4e4ea; border-top: 0; align-self: flex-start; padding: 3px 2px 8px; background: #f1f0f7; }
.grip-h { display: block; width: 20px; height: 6px; margin: 0 auto 3px; background: radial-gradient(circle, #c4c4ca 1px, transparent 1px) 0 0 / 3px 3px; }
.tool-grid { display: grid; grid-template-columns: 33px 33px; }
.tool-grid button { display: grid; place-items: center; height: 34px; border-radius: 4px; }
.tool-grid button.on { border: 1px solid #2f7fb0; background: #dceefb; }
.tool-grid svg { width: 22px; height: 22px; overflow: visible; }
.tools hr { height: 2px; margin: 1px 6px; border: 0; background: #a0a0a0; }
.n, .nf { fill: none; stroke: #1c4566; stroke-width: 1.500px; }
.nf { fill: #e8f3fb; }
.c, .cf { fill: none; stroke: #14a3d8; stroke-width: 1.700px; }
.cf { fill: #d8effb; }
.r { fill: none; stroke: #ee1c1c; stroke-width: 1.700px; }
.big { stroke-width: 2.500px; }
.b { fill: none; stroke: #1468a5; stroke-width: 2px; }
.wide { stroke-width: 3px; }
.rd { fill: #f21515; }
.nd { fill: #103a5c; }
.a1 { fill: #1c4566; font: 11px "Liberation Serif", serif; text-anchor: middle; }

.viewport { position: relative; flex: 1; min-width: 0; background: #cdcdcb; }
.model { position: absolute; inset: 0; width: 100%; height: 100%; }

.panel { position: absolute; left: 1043px; top: -5px; width: 358px; height: 919px; display: flex; flex-direction: column; overflow: hidden; border: 1px solid #b8b8b8; border-radius: 5px; background: #fff; box-shadow: 0 3px 10px rgb(0 0 0 / 28%); font-family: Inter, sans-serif; }
.panel-title { display: flex; align-items: center; justify-content: space-between; height: 31px; padding: 0 1px 2px 8px; background: #f2f2f2; color: #8a8a8a; font: 13px/18px "Open Sans", sans-serif; }
.panel-title button { width: 20px; height: 20px; margin-top: 4px; background: #d5d5d5; color: #fff; font-size: 10px; line-height: 18px; }
.panel-main { flex: 1; display: flex; min-height: 0; }
.panel-body { flex: 1; overflow: hidden; }
.brand { display: flex; align-items: center; height: 63px; padding: 0 23px 0 16px; border-bottom: 1px solid #cddbe7; color: #8fa2b8; font-size: 10px; font-weight: 800; }
.brand h1 { margin-right: auto; color: #0b1a33; font-size: 17px; font-weight: 800; }
.brand b, .dialog h2 b { color: #0060f5; font-weight: inherit; }
.brand button svg { width: 15px; height: 15px; margin-left: 16px; }
.panel-content { padding: 15px 16px 0; }
.panel h2 { margin-bottom: 11px; color: #0b1a33; font-size: 12px; line-height: 18px; font-weight: 700; }
.cards { display: grid; grid-template-columns: 1fr 1fr; gap: 13px; margin-bottom: 24px; }
.cards button { display: flex; flex-direction: column; align-items: center; gap: 10px; height: 119px; padding-top: 21px; border: 1px solid #d3e0eb; border-radius: 9px; color: #40566e; font-size: 11px; line-height: 18px; font-weight: 600; letter-spacing: .5px; }
.cards i { display: grid; place-items: center; width: 50px; height: 50px; border-radius: 50%; background: #eff4f9; }
.cards svg { width: 24px; height: 24px; fill: none; stroke: #48607a; stroke-width: 1.800px; }
.cards .blue svg { stroke: #0060f5; }
.actions { display: grid; gap: 9px; }
.actions button { display: flex; align-items: center; justify-content: space-between; height: 42px; padding: 0 14px; border: 1px solid #d3e0eb; border-radius: 6px; color: #13233c; font-size: 12px; font-weight: 600; }
.actions svg { width: 14px; height: 8px; }
.scroll { display: flex; flex-direction: column; width: 18px; padding: 0 1px; background: #3b3b3b; }
.scroll .thumb { flex: 1; background: #686868; }
.up, .down { display: grid; place-items: center; height: 18px; }
.down { height: 57px; align-items: end; padding-bottom: 8px; }
.up::before, .down::before { content: ""; border: 4px solid transparent; border-top: 0; border-bottom-color: #999; }
.down::before { border-top: 4px solid #fff; border-bottom: 0; }

.dialog { position: absolute; left: 696px; top: 313px; width: 335px; overflow: hidden; padding-bottom: 12px; border-radius: 8px; background: #f6f9fc; box-shadow: 0 0 1px #777, 0 8px 22px rgb(0 0 0 / 40%); font-family: Inter, sans-serif; }
.dialog-title { display: flex; align-items: center; height: 31px; padding: 0 8px 2px; background: #f2f2f2; color: #8f8f8f; font: 13px/18px "Open Sans", sans-serif; }
.dialog-title > svg { width: 16px; height: 16px; margin-right: 7px; }
.dialog-title span { margin-right: auto; }
.dialog-title button { width: 32px; margin-left: 16px; display: grid; place-items: center; }
.dialog-title button svg { width: 12px; height: 12px; fill: none; stroke: #8f8f8f; }
.dialog h2 { height: 53px; border-bottom: 2px solid #0060f5; background: #fff; color: #0b1a33; font-size: 14px; line-height: 51px; font-weight: 700; text-align: center; }
.dialog-body { display: flex; flex-direction: column; gap: 4px; height: 104px; padding: 14px 16px 0 17px; border-bottom: 2px solid #dbe5ee; }
.dialog-body label { color: #587089; font-size: 10px; line-height: 16px; font-weight: 700; letter-spacing: .5px; }
.dialog-body input { height: 39px; padding: 0 11px; border: 1px solid #d3e0eb; border-radius: 6px; color: #13233c; font-size: 14px; font-weight: 500; }
.dialog-foot { display: grid; grid-template-columns: 147px 1fr; gap: 9px; padding: 16px 16px 17px 17px; background: #fff; }
.dialog-foot button { height: 45px; border: 1px solid #d3e0eb; border-radius: 4px; color: #587089; font-size: 13px; font-weight: 900; }
.dialog-foot .primary { border: 0; background: #0060f5; color: #fff; }

.tray { flex: none; width: 320px; margin-left: 6px; overflow: hidden; display: flex; flex-direction: column; border-left: 1px solid #c0c1c8; border-top: 1px solid #d8d8dd; border-bottom: 1px solid #b8bac0; background: #f2f6fb; }
.tray > * { flex: none; }
.tray > h2 { height: 31px; margin-bottom: 1px; padding-left: 4px; border-bottom: 1px solid #b8bac0; background: #f1f0f6; font-size: 13px; line-height: 30px; font-weight: 700; }
.acc { display: flex; align-items: center; gap: 6px; height: 27px; margin: 0 0 1px 1px; padding-left: 6px; background: #e0e1ea; color: #4a555f; }
.acc svg { width: 14px; height: 14px; }
.entity { height: 242px; padding: 9px 0 0 9px; }
.entity h3 { height: 26px; border-bottom: 1px solid #d7dde4; font-size: 13px; line-height: 18px; font-weight: 700; }
.entity-row { display: flex; gap: 9px; padding-top: 7px; }
.swatch { width: 53px; height: 53px; border: 1px solid #bbb; border-radius: 3px; box-shadow: inset 0 0 0 1px #fff; background: linear-gradient(to top right, #9fb1bb 50%, #fff 50%); }
.fields { flex: 1; display: grid; grid-template-columns: 87px 1fr; grid-auto-rows: 26px; row-gap: 4px; align-items: center; color: #4a555f; }
.fields label, .fields > span { line-height: 20px; white-space: nowrap; }
.fields select, .fields input { width: 100%; height: 26px; border-right: 0; border-radius: 3px 0 0 3px; padding: 0 4px; }
.fields input { padding: 0 2px; }
.toggles { display: flex; gap: 2px; }
.toggles button { display: grid; place-items: center; width: 23px; height: 23px; border: 1px solid #b9bbbf; border-radius: 3px; background: #ececee; }
.toggles .flat { border-color: transparent; background: none; }
.toggles svg { width: 18px; height: 18px; }

.styles { height: 306px; margin-bottom: 6px; padding: 21px 0 0 9px; border-bottom: 1px solid #d9dde5; }
.style-head { display: flex; height: 89px; }
.thumb-big { width: 89px; padding: 2px; border: 1px solid #bbb; border-radius: 3px; background: #fff; }
.thumb-big svg { width: 83px; height: 83px; background: linear-gradient(#dfe6e8, #eef0f0 26%, #cfcfcd 26%); }
.style-text { flex: 1; min-width: 0; display: flex; flex-direction: column; }
.style-text input { height: 26px; padding: 0 3px 4px; border-right: 0; border-radius: 0; }
.style-text p { flex: 1; padding: 5px 0 0 5px; border-left: 1px solid #d8d8d8; border-bottom: 1px solid #d8d8d8; background: #fff; color: #333b44; white-space: nowrap; overflow: hidden; }
.tabs { display: flex; align-items: flex-end; height: 75px; }
.tabs::before { content: ""; align-self: flex-start; width: 100%; height: 1px; margin: 36px -100% 0 0; background: #d7dde4; }
.tabs button { height: 26px; padding: 0 11px; border: 1px solid #e0e4ea; border-bottom: 0; background: #fff; color: #4a555f; }
.tabs .on { height: 28px; background: #f4f7fb; }
.style-nav { display: flex; align-items: center; gap: 10px; height: 30px; padding-left: 6px; }
.style-nav button svg { width: 16px; height: 16px; }
.style-nav select { flex: 1; height: 26px; margin-left: -5px; padding: 0 4px; border-right: 0; border-radius: 3px 0 0 3px; }
.thumbs { display: grid; grid-template-columns: repeat(5, 71px); grid-auto-rows: 71px; width: 400px; height: 82px; padding: 2px; overflow: hidden; border: 1px solid #aeb2b8; background: #fff; }
.cell { padding: 2px; border: 1px solid #dfe0e6; }
.cell svg { width: 65px; height: 65px; background: #fff; }
.sel { border: 2px solid #0078d7; }
.sel svg { width: 63px; height: 63px; }
.land svg { background: linear-gradient(#8fb0d5, #e4ecf2 26%, #a2b58e 26%); }
.sand svg { background: #dcd8d2; }
.gray svg { background: linear-gradient(#dfe6e8, #eef0f0 26%, #cfcfcd 26%); }
.s1, .s2, .s3, .s4 { background-clip: content-box; background-color: #1f9cc4; }
.s2 { background-color: #4cc3f5; }
.s3 { background-color: #bcd6d8; }
.s4 { background-color: #00a8e0; }
.outline { padding: 11px 0 0 3px; }
.filter { display: flex; align-items: center; gap: 4px; }
.filter input { flex: 1; height: 26px; padding: 0 3px; border-right: 0; }
.filter input::placeholder { color: #b9bec6; }
.tree { display: flex; align-items: center; gap: 7px; height: 20px; margin-top: 9px; padding-left: 29px; border: 1px solid #b4b8be; background: #fff; font-size: 13px; font-weight: 700; }
.tree svg { width: 12px; height: 12px; }

.footer { height: 58px; display: flex; flex-direction: column; }
.measure { display: flex; align-items: center; align-self: flex-end; width: 312px; height: 37px; margin-right: 126px; padding-right: 2px; border: 1px solid #e0e0e6; }
.measure label { margin-right: auto; }
.measure input { width: 167px; height: 23px; background: #f1f0f6; }
.footer p { margin: 5px 0 0 11px; padding-left: 6px; border-left: 1px solid #d4d4da; white-space: nowrap; }
```
